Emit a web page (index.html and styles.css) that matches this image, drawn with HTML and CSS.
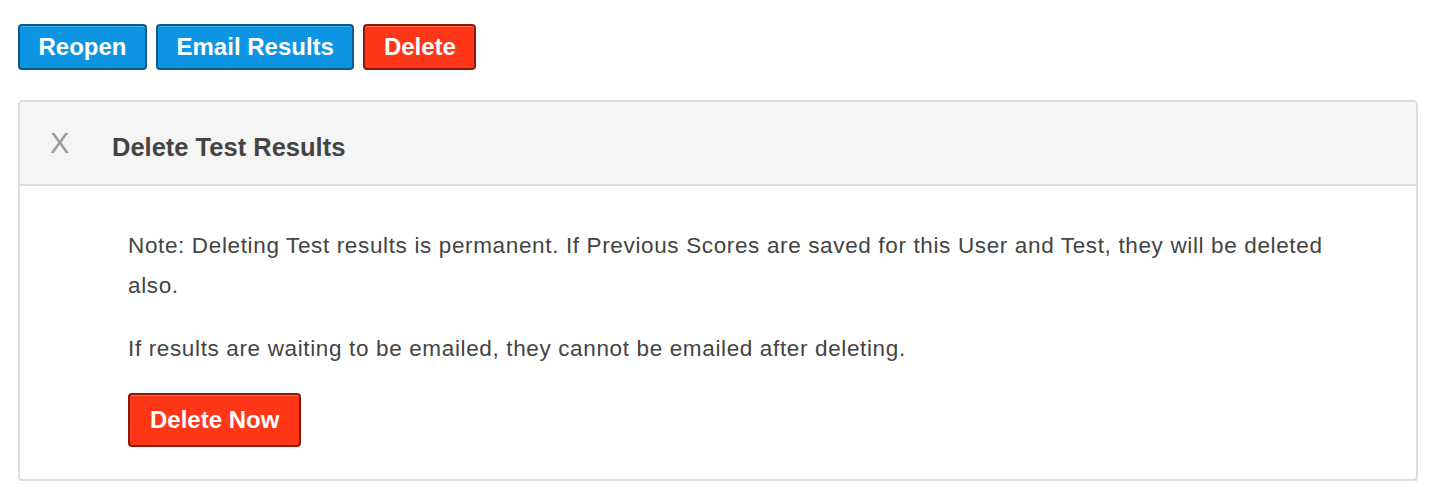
FILE: index.html
```html
<!DOCTYPE html>
<html>
	<head>
		<meta charset="UTF-8">
		<title>Delete Test Results</title>
		<link rel="stylesheet" href="styles.css">
	</head>

	<body>
		<div class="actions">
			<button class="btn btn-blue">Reopen</button>
			<button class="btn btn-blue">Email Results</button>
			<button class="btn btn-red">Delete</button>
		</div>

		<div class="panel">
			<div class="panel-head">
				<span class="close">X</span>
				<h2>Delete Test Results</h2>
			</div>
			<div class="panel-body">
				<p>Note: Deleting Test results is permanent. If Previous Scores are saved for this User and Test, they will be deleted also.</p>
				<p>If results are waiting to be emailed, they cannot be emailed after deleting.</p>
				<button class="btn btn-red btn-big">Delete Now</button>
			</div>
		</div>
	</body>

</html>
```

FILE: styles.css
```css
/* page: buttons row on top, then the delete panel */
body {
	margin: 0;
	padding: 24px 14px 0 18px;
	font-family: "Liberation Sans", Arial, sans-serif;
	color: #444;
	background-color: #fff;
}

.actions {
	display: flex;
	gap: 9px;
}

.btn {
	height: 46px;
	line-height: 42px;
	padding: 0 18.5px;
	font-family: "Liberation Sans", Arial, sans-serif;
	font-size: 24px;
	font-weight: bold;
	color: #fff;
	border: 2px solid;
	border-radius: 4px;
	box-shadow: inset 0 1px 0 rgba(255, 255, 255, 0.25);
}

.btn-blue {
	background-color: #0b95e2;
	border-color: #0e5b8a;
}

.btn-red {
	background-color: #ff3617;
	border-color: #8a1b0b;
}

.btn-big {
	height: 54px;
	line-height: 50px;
	padding: 0 20px;
	margin-top: 24px;
}

.panel {
	margin-top: 30px;
	border: 2px solid #ddd;
	border-radius: 5px;
	box-shadow: 0 2px 0 #e0e0e0;
}

.panel-head {
	display: flex;
	align-items: flex-start;
	padding: 30px 0 22px 30px;
	background-color: #f5f5f5;
	border-bottom: 2px solid #ddd;
	border-radius: 5px 5px 0 0;
}

.close {
	width: 62px;
	margin-top: -4px;
	font-size: 29px;
	line-height: 30px;
	color: #999;
}

.panel-head h2 {
	margin: 0;
	font-size: 25.5px;
	line-height: 30px;
	font-weight: bold;
	color: #444;
}

.panel-body {
	padding: 40px 80px 32px 108px;
}

.panel-body p {
	margin: 0 0 23px;
	font-size: 22.5px;
	line-height: 40px;
	letter-spacing: 0.64px;
}

.panel-body p + p {
	margin-bottom: 0;
}
```
